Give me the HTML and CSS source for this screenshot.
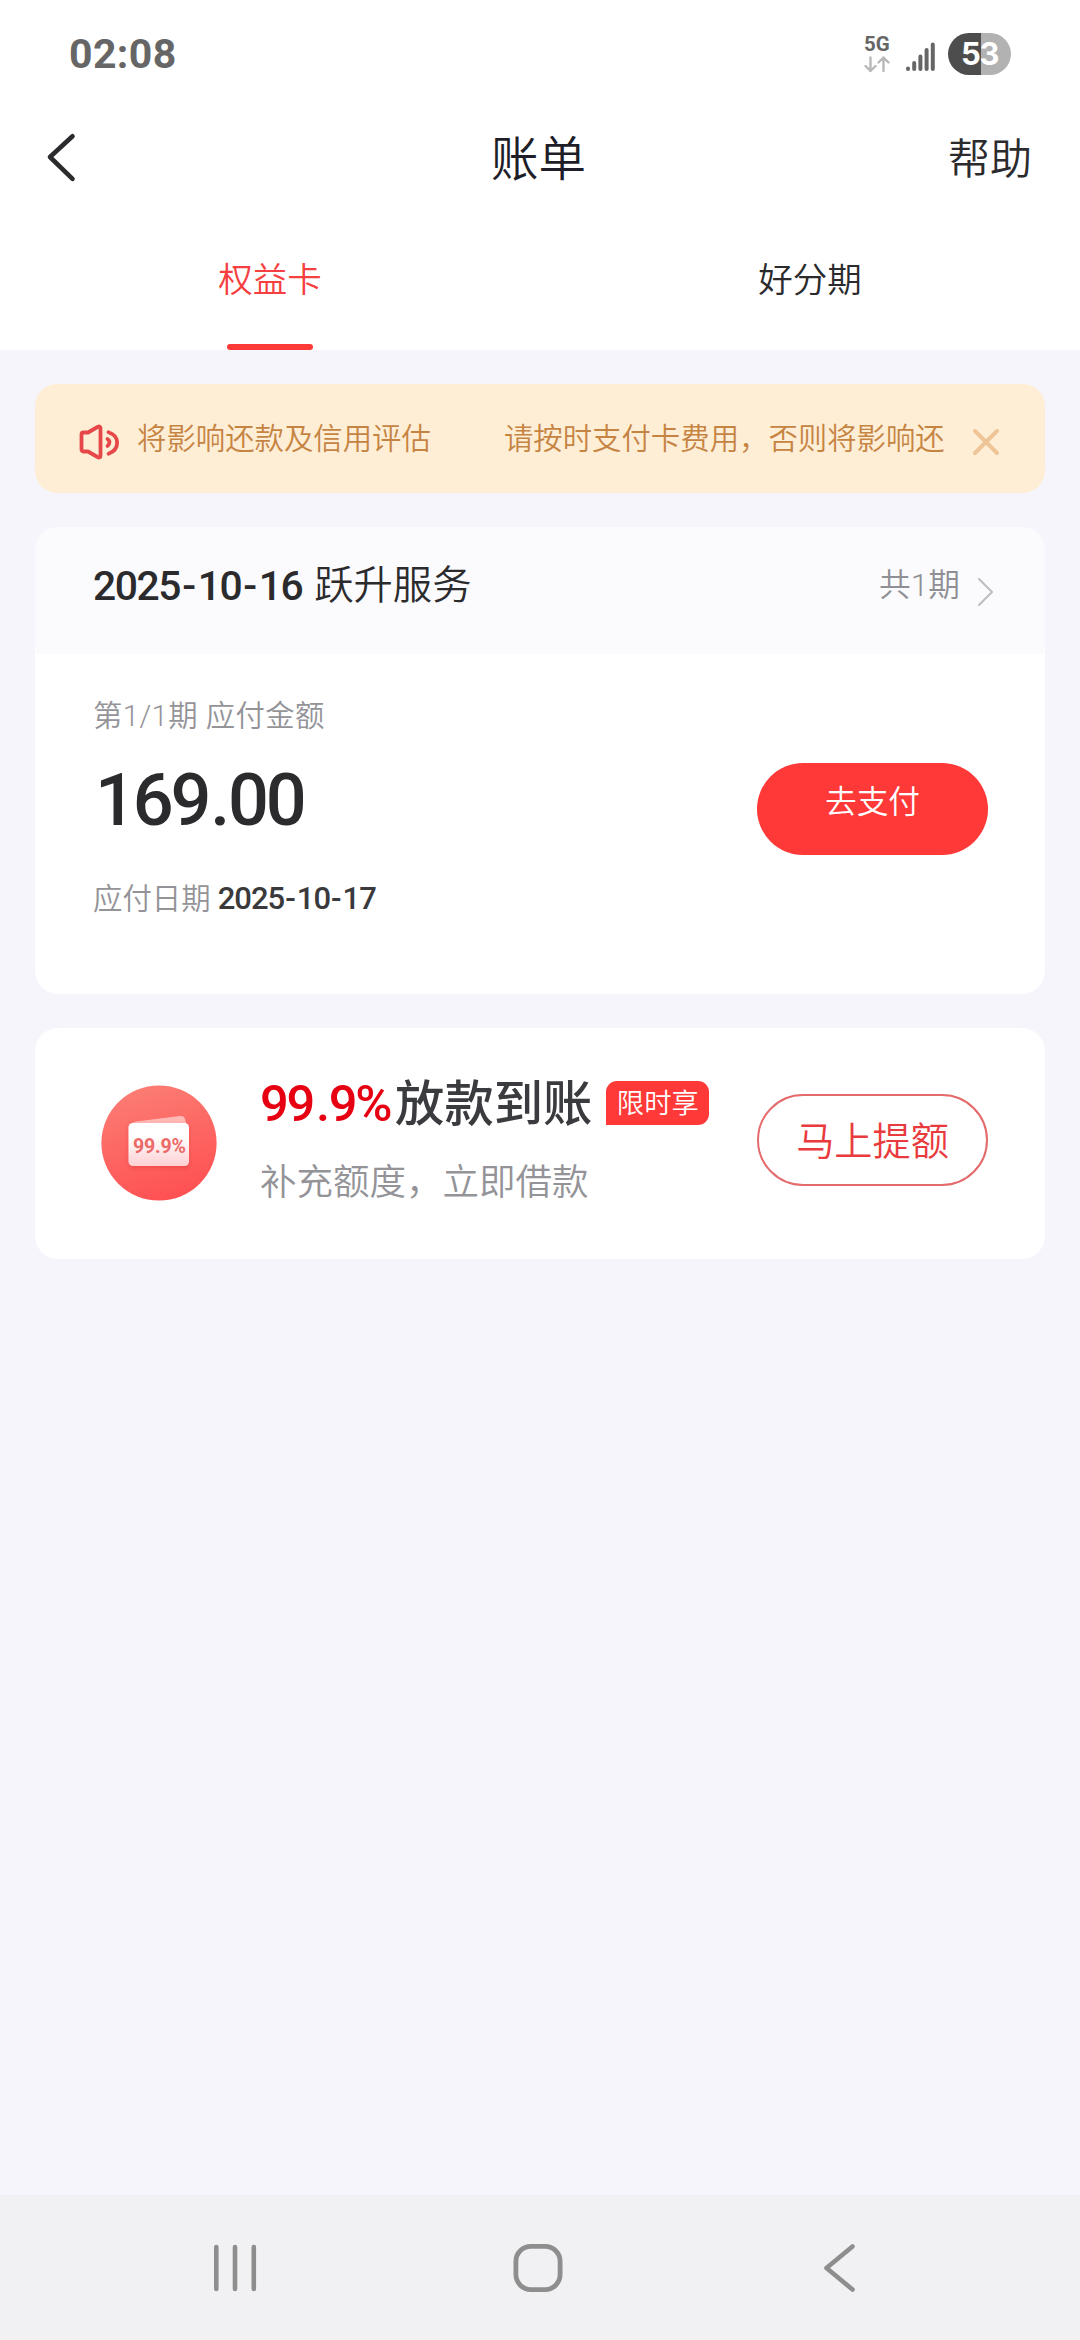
FILE: index.html
```html
<!DOCTYPE html>
<html lang="zh-CN">
<head>
<meta charset="utf-8">
<title>账单</title>
<link rel="stylesheet" href="styles.css">
</head>
<body>
<div class="screen">
  <header class="top">
    <div class="status">
      <span class="clock">02:08</span>
      <div class="status-icons">
        <div class="network">
          <span class="network-label">5G</span>
          <svg width="26" height="17" viewBox="0 0 26 17" fill="none" stroke="#b9b9b9" stroke-width="2.4" stroke-linecap="round" stroke-linejoin="round"><path d="M6.5 1.500V15M1.500 10l5 5 5-5M19.500 15V1.500M14.500 6.500l5-5 5 5"/></svg>
        </div>
        <svg class="signal" width="29" height="30" viewBox="0 0 29 30" fill="none" stroke="#666" stroke-width="4" stroke-linecap="round"><path d="M2 27.500v.5M8.200 22v6M14.400 15.500V28M20.600 9V28M26.800 3.500V28"/></svg>
        <span class="battery">53</span>
      </div>
    </div>
    <nav class="titlebar">
      <svg class="back" width="32" height="52" viewBox="0 0 32 52" fill="none" stroke="#2b2b2d" stroke-width="4.600" stroke-linecap="round" stroke-linejoin="round"><path d="M27.500 5.200L5 26l22.500 21.800"/></svg>
      <h1 class="title">账单</h1>
      <span class="help">帮助</span>
    </nav>
    <div class="tabs">
      <div class="tab active">权益卡</div>
      <div class="tab">好分期</div>
    </div>
  </header>

  <main class="content">
    <section class="notice">
      <svg class="speaker" width="42" height="36" viewBox="0 0 42 36" fill="none" stroke="#e6484a" stroke-width="3.800" stroke-linecap="round" stroke-linejoin="round"><path d="M3.500 10.500q0-2 2-2H10L19.500 3q3-1.500 3 1.500v27q0 3-3 1.500L10 27.500H5.500q-2 0-2-2z"/><path d="M29.500 15q4 3 0 7M30.500 8.200c11.500 3.500 11.500 17.500 0 21.500"/></svg>
      <div class="marquee"><span>将影响还款及信用评估</span><span>请按时支付卡费用，否则将影响还</span></div>
      <svg class="close" width="28" height="28" viewBox="0 0 28 28" fill="none" stroke="#efc496" stroke-width="4" stroke-linecap="round"><path d="M3 3l22 22M25 3L3 25"/></svg>
    </section>

    <section class="card bill">
      <div class="bill-head">
        <div class="bill-name"><span class="head-date">2025<i>-</i>10<i>-</i>16</span><span>跃升服务</span></div>
        <div class="periods"><span>共1期</span>
          <svg width="18" height="30" viewBox="0 0 18 30" fill="none" stroke="#bcbcc2" stroke-width="2" stroke-linecap="round"><path d="M2 2l13 13L2 28"/></svg>
        </div>
      </div>
      <div class="bill-body">
        <div class="bill-info">
          <div class="label period">第1/1期 应付金额</div>
          <div class="amount">169<i>.</i>00</div>
          <div class="label due">应付日期 <b>2025<i>-</i>10<i>-</i>17</b></div>
        </div>
        <div class="btn pay">去支付</div>
      </div>
    </section>

    <section class="card promo">
      <svg class="wallet" width="116" height="116" viewBox="0 0 116 116">
        <defs>
          <linearGradient id="disc" x1="0.3" y1="0" x2="0.6" y2="1"><stop offset="0" stop-color="#fb7d74"/><stop offset="1" stop-color="#ff5052"/></linearGradient>
          <linearGradient id="face" x1="0" y1="0" x2="0" y2="1"><stop offset="0.3" stop-color="#fff"/><stop offset="1" stop-color="#fed0d2"/></linearGradient>
          <filter id="shade" x="-20%" y="-20%" width="140%" height="150%"><feDropShadow dx="0" dy="2" stdDeviation="2" flood-color="#d33" flood-opacity="0.45"/></filter>
        </defs>
        <circle cx="58" cy="58" r="57.600" fill="url(#disc)"/>
        <path d="M30 40q1-3 5-3.500L79 31q4-.5 5 3l2 7z" fill="#ffb9b5"/>
        <rect x="27.500" y="38" width="60.500" height="43" rx="4.500" fill="url(#face)" filter="url(#shade)"/>
        <text class="wallet-text" x="58.500" y="67.800" text-anchor="middle" textLength="53" fill="#ec6a68">99.9%</text>
      </svg>
      <div class="promo-text">
        <div class="promo-title"><span class="rate">99<i>.</i>9%</span><span class="promo-name">放款到账</span><span class="tag">限时享</span></div>
        <div class="promo-sub">补充额度，立即借款</div>
      </div>
      <div class="btn raise">马上提额</div>
    </section>
  </main>

  <footer class="navbar">
    <svg width="48" height="52" viewBox="0 0 48 52" fill="none" stroke="#8e8e8e" stroke-width="4.600" stroke-linecap="round"><path d="M5.300 5v42M24 5v42M42.800 5v42"/></svg>
    <svg class="home" width="52" height="52" viewBox="0 0 52 52" fill="none" stroke="#8e8e8e" stroke-width="4.800"><rect x="3.900" y="4.400" width="44.200" height="43.200" rx="15"/></svg>
    <svg width="36" height="52" viewBox="0 0 36 52" fill="none" stroke="#8e8e8e" stroke-width="4.600" stroke-linecap="round" stroke-linejoin="round"><path d="M30.500 4.500L4.500 26l26 21.500"/></svg>
  </footer>
</div>
</body>
</html>
```
FILE: styles.css
```css
* { box-sizing: border-box; margin: 0; padding: 0; }
body {
  font-family: Roboto, "Noto Sans CJK SC", sans-serif;
  font-weight: 350;
  color: #2b2b2d;
  background: #f5f5fb;
}
svg { display: block; flex: none; }
i { font-style: normal; }
.screen { display: flex; flex-direction: column; width: 1080px; height: 2340px; white-space: nowrap; }

.top { background: #fff; height: 350px; display: flex; flex-direction: column; }
.status { height: 108px; padding: 0 69px; display: flex; align-items: center; justify-content: space-between; }
.clock { font-weight: 700; font-size: 41px; line-height: 48px; letter-spacing: 0.400px; color: #666; }
.status-icons { display: flex; align-items: center; }
.network { width: 26px; margin-right: 16px; display: flex; flex-direction: column; gap: 3px; }
.network-label { font-size: 20.500px; line-height: 18px; font-weight: 700; color: #666; }
.signal { margin: 3px 13px 0 0; }
.battery {
  width: 63px; height: 42px; border-radius: 21px;
  background: linear-gradient(90deg, #4d4d4d 0 33px, #b2b2b2 33px);
  color: #fff; font: 700 31px/42px Inter, sans-serif; letter-spacing: -1.500px; text-align: center;
}
.titlebar { height: 103px; padding: 0 48px 0 45px; display: grid; grid-template-columns: 1fr auto 1fr; align-items: center; }
.back { margin-bottom: 5px; }
.title { font-size: 47.500px; font-weight: 350; line-height: 60px; color: #1e1e28; }
.help { font-size: 42px; line-height: 60px; justify-self: end; }
.tabs { flex: 1; display: grid; grid-template-columns: 1fr 1fr; }
.tab { display: flex; flex-direction: column; align-items: center; justify-content: flex-end; font-size: 34.500px; line-height: 48px; padding-bottom: 46px; }
.tab.active { color: #f53f40; padding-bottom: 0; }
.tab.active::after { content: ""; width: 86px; height: 6px; margin-top: 40px; border-radius: 3px; background: #fd3a38; }

.content { flex: 1; padding: 34px 35px 0; display: flex; flex-direction: column; }
.notice { height: 109px; border-radius: 22px; background: #feeed6; display: flex; align-items: center; padding: 0 45px 0 43px; }
.speaker { margin-top: 7px; }
.marquee { width: 812px; margin-left: 17px; display: flex; gap: 73px; overflow: hidden; font-size: 29.400px; line-height: 44px; color: #c68443; }
.close { margin: 7px 0 0 auto; }

.card { background: #fff; border-radius: 23px; overflow: hidden; }
.bill { margin-top: 34px; height: 467px; }
.bill-head { height: 127px; background: #fbfbfd; padding: 0 50px 9px 58px; display: flex; align-items: center; justify-content: space-between; }
.bill-name { display: flex; align-items: center; gap: 12px; font-size: 39.300px; line-height: 50px; }
.head-date { font-size: 40.800px; font-weight: 500; letter-spacing: -1.400px; }
.head-date i { padding: 0 3px 0 2px; }
.periods { display: flex; align-items: center; gap: 17px; font-size: 31.700px; line-height: 40px; color: #8f8f95; }
.periods svg { margin-top: 11px; }
.bill-body { padding: 41px 57px 0 58px; display: flex; justify-content: space-between; }
.label { font-size: 29.400px; line-height: 42px; color: #939398; }
.period { letter-spacing: 0.400px; }
.amount { margin: 24px 0 37px 2px; font-size: 72px; line-height: 80px; font-weight: 500; letter-spacing: -3.200px; }
.amount i { padding: 0 1px 0 2px; }
.due b { font-size: 31px; font-weight: 500; letter-spacing: -1px; color: #3a3a3c; }
.due b i { padding: 0 2px 0 1px; }
.btn { width: 231px; height: 92px; border-radius: 46px; text-align: center; }
.pay { margin-top: 68px; background: #ff3838; color: #fff; font-size: 31.700px; line-height: 80px; }

.promo { margin-top: 34px; height: 231px; padding: 0 57px 0 66px; display: flex; }
.wallet { margin-top: 57px; }
.wallet-text { font-size: 19.500px; font-weight: 700; }
.promo-text { margin: 44px 0 0 43px; }
.promo-title { display: flex; align-items: center; line-height: 64px; font-size: 49.300px; font-weight: 500; color: #3a3b3e; }
.rate { color: #e60012; font-size: 50.600px; letter-spacing: -2.300px; }
.rate i { padding: 0 1px 0 3px; }
.promo-name { margin-left: 5px; }
.tag { margin: -2px 0 0 14px; width: 103px; height: 44px; border-radius: 11px 11px 11px 0; background: #ff3838; color: #fff; font-size: 27.300px; font-weight: 350; line-height: 46px; text-align: center; }
.promo-sub { margin-top: 22px; font-size: 36.500px; line-height: 50px; color: #939398; }
.raise { margin: 66px 0 0 auto; border: 2px solid #e46a6c; color: #e93b3e; font-size: 38.200px; line-height: 92px; }

.navbar { height: 145px; background: #f1f1f3; padding: 0 222px 0 211px; display: flex; align-items: center; justify-content: space-between; }
.home { margin-right: 6px; }
```
